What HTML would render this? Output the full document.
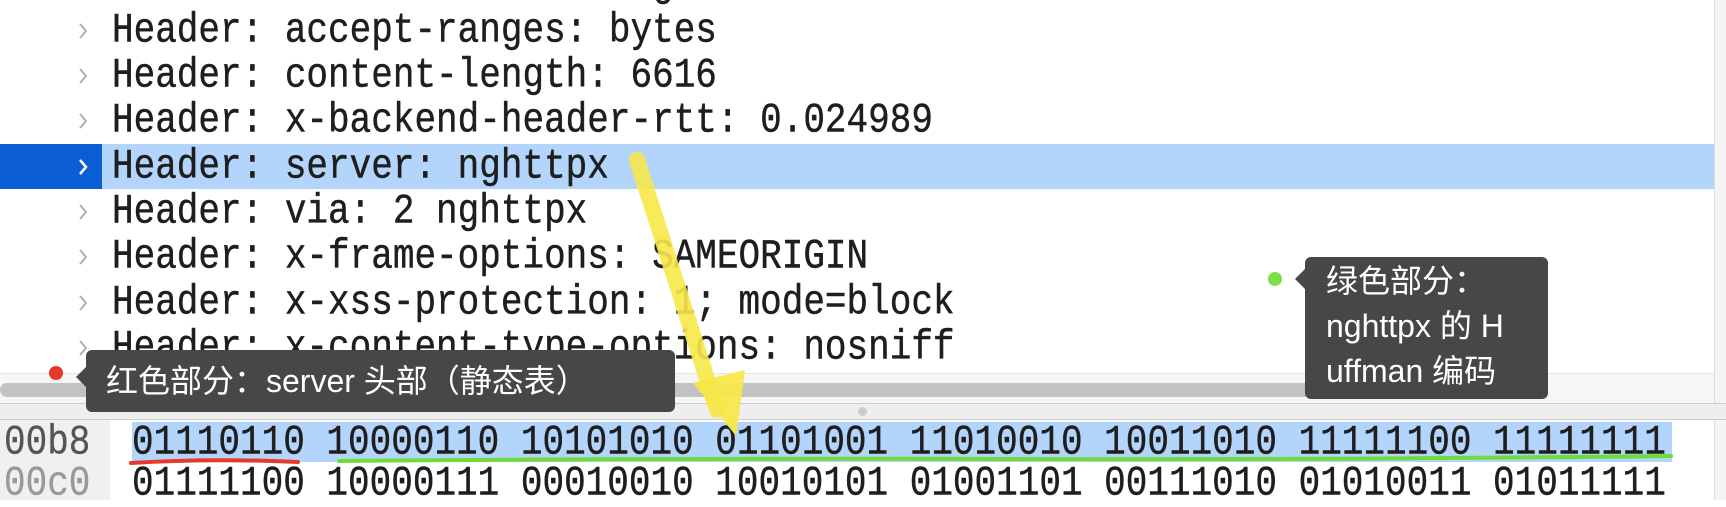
<!DOCTYPE html>
<html><head><meta charset="utf-8"><style>
body{margin:0;width:1726px;height:500px;overflow:hidden;background:#fff;position:relative;font-family:"Liberation Mono",monospace;}
.row{position:absolute;left:0;width:1714px;height:45px;font-size:36px;line-height:45px;color:#1e1e1e;}
.row .t{position:absolute;left:112px;white-space:pre;transform:scaleY(1.15);transform-origin:0 50%;-webkit-text-stroke:0.4px #1e1e1e;}
.row svg{position:absolute;left:78px;top:14px;}
.sel{background:#b3d5fb;}
.sel .l{position:absolute;left:0;top:0;width:102px;height:45px;background:#0b5dd3;}
.hex{position:absolute;font-size:36px;line-height:41px;white-space:pre;color:#1e1e1e;transform:scaleY(1.15);transform-origin:0 50%;-webkit-text-stroke:0.4px #1e1e1e;}
.tip{position:absolute;background:#474747;color:#fff;border-radius:6px;font-family:"Liberation Sans","Noto Sans CJK SC",sans-serif;font-size:32px;}
</style></head><body>
<div class="row" style="top:-38px"><span class="t">Header: alt-svc: clear...g</span></div>
<div class="row" style="top:8px"><svg width="10" height="18"><path d="M2 2 L8 9 L2 16" stroke="#b0b0b0" stroke-width="2" fill="none"/></svg><span class="t">Header: accept-ranges: bytes</span></div>
<div class="row" style="top:53px"><svg width="10" height="18"><path d="M2 2 L8 9 L2 16" stroke="#b0b0b0" stroke-width="2" fill="none"/></svg><span class="t">Header: content-length: 6616</span></div>
<div class="row" style="top:98px"><svg width="10" height="18"><path d="M2 2 L8 9 L2 16" stroke="#b0b0b0" stroke-width="2" fill="none"/></svg><span class="t">Header: x-backend-header-rtt: 0.024989</span></div>
<div class="row sel" style="top:144px"><div class="l"></div><svg width="10" height="18"><path d="M2 2 L8 9 L2 16" stroke="#fff" stroke-width="2.5" fill="none"/></svg><span class="t">Header: server: nghttpx</span></div>
<div class="row" style="top:189px"><svg width="10" height="18"><path d="M2 2 L8 9 L2 16" stroke="#b0b0b0" stroke-width="2" fill="none"/></svg><span class="t">Header: via: 2 nghttpx</span></div>
<div class="row" style="top:234px"><svg width="10" height="18"><path d="M2 2 L8 9 L2 16" stroke="#b0b0b0" stroke-width="2" fill="none"/></svg><span class="t">Header: x-frame-options: SAMEORIGIN</span></div>
<div class="row" style="top:280px"><svg width="10" height="18"><path d="M2 2 L8 9 L2 16" stroke="#b0b0b0" stroke-width="2" fill="none"/></svg><span class="t">Header: x-xss-protection: 1; mode=block</span></div>
<div class="row" style="top:325px"><svg width="10" height="18"><path d="M2 2 L8 9 L2 16" stroke="#b0b0b0" stroke-width="2" fill="none"/></svg><span class="t">Header: x-content-type-options: nosniff</span></div>
<div style="position:absolute;left:1714px;top:0;width:12px;height:420px;background:#f4f4f4;border-left:1px solid #ddd"></div>
<div style="position:absolute;left:0;top:373px;width:1714px;height:30px;background:#f6f6f6;border-top:1px solid #e4e4e4"></div>
<div style="position:absolute;left:0;top:383px;width:1330px;height:14px;background:#c2c2c2;border-radius:7px"></div>
<div style="position:absolute;left:0;top:403px;width:1726px;height:17px;background:#eee;border-top:1px solid #ccc;border-bottom:1px solid #ccc;box-sizing:border-box"></div>
<div style="position:absolute;left:858px;top:407px;width:9px;height:9px;border-radius:50%;background:#ccc"></div>
<div style="position:absolute;left:0;top:420px;width:110px;height:80px;background:#f0f0f0"></div>
<div style="position:absolute;left:132px;top:422px;width:1540px;height:40px;background:#b3d5fb"></div>
<div style="position:absolute;left:1714px;top:420px;width:12px;height:80px;background:#f4f4f4;border-left:1px solid #ddd"></div>
<div class="hex" style="left:4px;top:422px;color:#555;-webkit-text-stroke:0.3px #555">00b8</div>
<div class="hex" style="left:4px;top:463px;color:#999;-webkit-text-stroke:0.3px #999">00c0</div>
<div class="hex" style="left:132px;top:422px">01110110 10000110 10101010 01101001 11010010 10011010 11111100 11111111</div>
<div class="hex" style="left:132px;top:463px">01111100 10000111 00010010 10010101 01001101 00111010 01010011 01011111</div>
<svg style="position:absolute;left:0;top:0" width="1726" height="500">
<path d="M131 463 Q210 458 298 462" stroke="#e53a2a" stroke-width="4" fill="none" stroke-linecap="round"/>
<path d="M339 461 Q700 458 1000 459 T1671 456" stroke="#6fdc3a" stroke-width="4" fill="none" stroke-linecap="round"/>
<path d="M637 160 L717 410" stroke="#f7e84a" stroke-width="16" stroke-linecap="round" opacity="0.9"/>
<path d="M693 383 L736 436 L745 370 Z" fill="#f7e84a" opacity="0.95"/>
<circle cx="56" cy="373" r="7" fill="#e53a2a"/>
<circle cx="1275" cy="279" r="7" fill="#7be046"/>
</svg>
<div class="tip" style="left:86px;top:350px;width:589px;height:62px;line-height:62px;"><span style="position:absolute;left:-10px;top:16px;width:0;height:0;border-top:11px solid transparent;border-bottom:11px solid transparent;border-right:11px solid #474747"></span><span style="padding-left:20px">红色部分：server 头部（静态表）</span></div>
<div class="tip" style="left:1305px;top:257px;width:243px;height:142px;line-height:45px;"><span style="position:absolute;left:-10px;top:11px;width:0;height:0;border-top:11px solid transparent;border-bottom:11px solid transparent;border-right:11px solid #474747"></span><div style="padding:2px 0 0 21px">绿色部分：<br>nghttpx 的 H<br>uffman 编码</div></div>
</body></html>
